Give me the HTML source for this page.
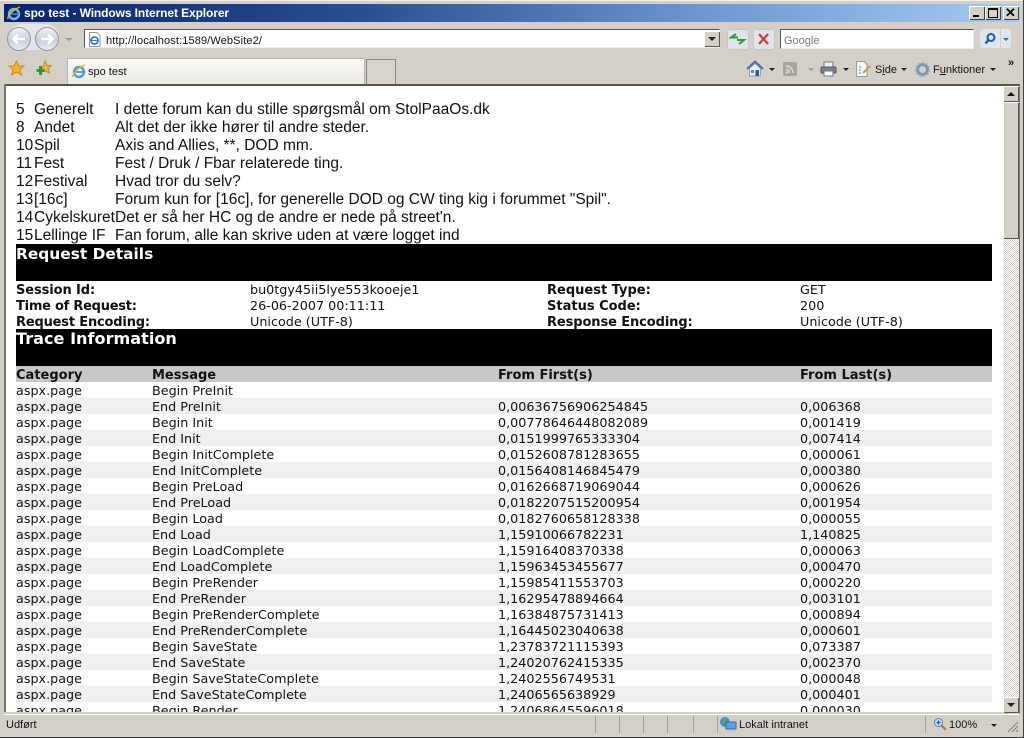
<!DOCTYPE html>
<html><head><meta charset="utf-8"><title>spo test - Windows Internet Explorer</title>
<style>
html,body{margin:0;padding:0;width:1024px;height:738px;overflow:hidden;background:#d4d0c8;}
.a{position:absolute;white-space:nowrap;}
#root{position:absolute;left:0;top:0;width:1024px;height:738px;overflow:hidden;background:#d4d0c8;font-family:"Liberation Sans",sans-serif;}
.ui{font-family:"Liberation Sans",sans-serif;font-size:11px;color:#111;line-height:14px;}
#page{position:absolute;left:6px;top:86px;width:997px;height:626px;background:#fff;overflow:hidden;}
.top{position:absolute;font:15.5px/18px "Liberation Sans",sans-serif;color:#111;white-space:nowrap;}
.v{position:absolute;font:12.75px/16px "DejaVu Sans",sans-serif;color:#111;white-space:nowrap;margin-top:1px;}
.b{font-weight:bold;font-size:13px;}
.bar{position:absolute;left:10px;width:976px;background:#000;}
.h{position:absolute;left:10px;font:bold 16px/18px "DejaVu Sans",sans-serif;color:#fff;white-space:nowrap;}
.row{position:absolute;left:10px;width:976px;height:16px;}
.row span{position:absolute;top:2px;font:12.75px/16px "DejaVu Sans",sans-serif;color:#111;white-space:nowrap;}
.row span:nth-child(1){left:0}.row span:nth-child(2){left:136px}.row span:nth-child(3){left:482px}.row span:nth-child(4){left:784px}
.g{background:#f0f0f0;}
.tb{position:absolute;width:16px;height:14px;background:#d4d0c8;box-shadow:inset 1px 1px 0 #fff,inset -1px -1px 0 #404040;}
.sb{position:absolute;left:1003px;width:16px;}
.arr{position:absolute;width:0;height:0;border-left:4px solid transparent;border-right:4px solid transparent;}
.dn{border-top:3px solid #222;}
</style></head><body>
<div id="root">
<!-- title bar -->
<div class="a" style="left:4px;top:4px;width:1016px;height:18px;background:linear-gradient(90deg,#0a246a 0%,#2a4f90 35%,#6f9ad0 70%,#a6caf0 100%);"></div>
<svg class="a" style="left:6px;top:5px" width="16" height="16" viewBox="0 0 16 16"><circle cx="8" cy="9" r="5" fill="none" stroke="#6fb7ea" stroke-width="2.4"/><path d="M3 9H13" stroke="#3a8fd0" stroke-width="1.6"/><path d="M2 14C1 11 8 4 14 2" fill="none" stroke="#e8b020" stroke-width="1.4"/></svg>
<div class="a" style="left:24px;top:6px;font:bold 12px/14px 'Liberation Sans',sans-serif;color:#fff;letter-spacing:-.1px">spo test - Windows Internet Explorer</div>
<div class="tb" style="left:969px;top:6px"><div class="a" style="left:4px;top:9px;width:6px;height:2px;background:#000"></div></div>
<div class="tb" style="left:985px;top:6px"><div class="a" style="left:3px;top:2px;width:8px;height:7px;border:1px solid #000;border-top-width:2px"></div></div>
<div class="tb" style="left:1003px;top:6px"><div class="a" style="left:2px;top:-1px;font:bold 13px/16px 'Liberation Sans',sans-serif;color:#000">✕</div></div>
<!-- nav -->
<div class="a" style="left:9px;top:24px;width:50px;height:26px;border-radius:13px;background:#e6e6e6"></div>
<svg class="a" style="left:6px;top:25px" width="56" height="27" viewBox="0 0 56 27"><defs><linearGradient id="n" x1="0" y1="0" x2="0" y2="1"><stop offset="0" stop-color="#f2f4f7"/><stop offset=".55" stop-color="#c8d0da"/><stop offset="1" stop-color="#eceff3"/></linearGradient></defs><circle cx="13" cy="14" r="11.5" fill="url(#n)" stroke="#8c96a4"/><circle cx="41" cy="14" r="11.5" fill="url(#n)" stroke="#8c96a4"/><path d="M19 14H8M12 9.500L7.500 14L12 18.500" fill="none" stroke="#fff" stroke-width="2.600"/><path d="M35 14H46M42 9.500L46.500 14L42 18.500" fill="none" stroke="#fff" stroke-width="2.600"/></svg>
<div class="arr" style="left:65px;top:38px;border-top:3px solid #9a9a9a"></div>
<!-- address -->
<div class="a" style="left:84px;top:29px;width:636px;height:19px;background:#fff;border:1px solid #7f9db9;border-color:#555 #eee #eee #555;box-sizing:border-box"></div>
<svg class="a" style="left:87px;top:32px" width="14" height="15" viewBox="0 0 14 15"><path d="M2.500 .500H10L13 3.500V14.500H2.500Z" fill="#fff" stroke="#999"/><circle cx="7.500" cy="8.500" r="3.500" fill="none" stroke="#2b7ec9" stroke-width="1.800"/><path d="M4 8.500H11" stroke="#2b7ec9"/></svg>
<div class="a ui" style="left:106px;top:34px;letter-spacing:.13px">http://localhost:1589/WebSite2/</div>
<div class="a" style="left:704px;top:31px;width:16px;height:16px;background:#d4d0c8;box-shadow:inset 1px 1px 0 #fff,inset -1px -1px 0 #555"><div class="arr dn" style="left:4px;top:6px;border-top-width:4px"></div></div>
<div class="a" style="left:727px;top:29px;width:20px;height:19px;background:#dfe4ea;border:1px solid #c4c8cc;border-radius:3px"></div>
<svg class="a" style="left:729px;top:32px" width="18" height="14" viewBox="0 0 18 14"><path d="M7 2L2 5.500H9" fill="none" stroke="#2f9a34" stroke-width="2"/><path d="M10 12L15 8H8" fill="none" stroke="#2f9a34" stroke-width="2"/></svg>
<div class="a" style="left:753px;top:29px;width:20px;height:19px;background:#dfe4ea;border:1px solid #c4c8cc;border-radius:3px"></div>
<svg class="a" style="left:757px;top:33px" width="13" height="12" viewBox="0 0 13 12"><path d="M2 1L11 11M11 1L2 11" stroke="#c8403c" stroke-width="2.300"/></svg>
<!-- search -->
<div class="a" style="left:780px;top:29px;width:194px;height:20px;background:#fff;border:1px solid;border-color:#555 #eee #eee #555;box-sizing:border-box"></div>
<div class="a ui" style="left:784px;top:34px;color:#7a7a7a">Google</div>
<div class="a" style="left:980px;top:29px;width:20px;height:19px;background:#dfe6f0;border-radius:3px 0 0 3px"></div>
<div class="a" style="left:1001px;top:29px;width:10px;height:19px;background:#dfe6f0;border-radius:0 3px 3px 0"></div>
<svg class="a" style="left:983px;top:32px" width="14" height="14" viewBox="0 0 14 14"><circle cx="8" cy="5.500" r="3.500" fill="none" stroke="#1f54b8" stroke-width="2"/><path d="M5.500 8L2.500 11.500" stroke="#1f54b8" stroke-width="2.400"/></svg>
<div class="arr" style="left:1003px;top:38px;border-left-width:3px;border-right-width:3px;border-top:3px solid #3a6ab0"></div>
<!-- favorites row -->
<svg class="a" style="left:8px;top:60px" width="17" height="17" viewBox="0 0 17 17"><path d="M8.500 1L10.800 6H16L11.800 9.500L13.500 15L8.500 12L3.500 15L5.200 9.500L1 6H6.200Z" fill="#f4b428" stroke="#c88a20"/></svg>
<svg class="a" style="left:35px;top:60px" width="17" height="17" viewBox="0 0 17 17"><path d="M10 1L12 5.500H16L13 8.500L14.500 13L10 11L6 12Z" fill="#e8b840" stroke="#b89030"/><path d="M5.500 6V15M1.500 10.500H9.500" stroke="#2f9a34" stroke-width="3"/></svg>
<div class="a" style="left:67px;top:58px;width:298px;height:26px;background:linear-gradient(#fafafa,#eeeae2);border:1px solid #b8b4ac;border-bottom:0;box-sizing:border-box"></div>
<svg class="a" style="left:71px;top:63px" width="16" height="16" viewBox="0 0 16 16"><circle cx="8" cy="9" r="5" fill="none" stroke="#4aa0de" stroke-width="2.400"/><path d="M3 9H13" stroke="#3a8fd0" stroke-width="1.600"/><path d="M2 14C1 11 8 4 14 2" fill="none" stroke="#e8b020" stroke-width="1.400"/></svg>
<div class="a ui" style="left:88px;top:65px">spo test</div>
<div class="a" style="left:366px;top:59px;width:30px;height:25px;background:#d8d4cc;border:1px solid #8a8880;border-bottom:0;box-sizing:border-box"></div>
<!-- tools -->
<svg class="a" style="left:746px;top:60px" width="18" height="17" viewBox="0 0 18 17"><path d="M1 9L9 1.500L17 9" fill="none" stroke="#46709e" stroke-width="2"/><path d="M3.500 8.500V16H14.500V8.500L9 3.500Z" fill="#e8eef4" stroke="#8aa0b8"/><rect x="9.500" y="10" width="3.500" height="6" fill="#245a96"/><rect x="5" y="10" width="3" height="3" fill="#5a86b4"/></svg>
<div class="arr dn" style="left:769px;top:68px;border-left-width:3px;border-right-width:3px"></div>
<div class="a" style="left:783px;top:62px;width:14px;height:14px;background:#a8a49c;border-radius:2px"></div>
<svg class="a" style="left:783px;top:62px" width="14" height="14" viewBox="0 0 14 14"><path d="M3 4C7 4 10 7 10 11M3 7.500C5 7.500 6.500 9 6.500 11" fill="none" stroke="#e0ddd6" stroke-width="1.500"/><circle cx="3.800" cy="10.500" r="1.200" fill="#e0ddd6"/></svg>
<div class="arr" style="left:808px;top:68px;border-left-width:3px;border-right-width:3px;border-top:3px solid #999"></div>
<svg class="a" style="left:820px;top:61px" width="17" height="16" viewBox="0 0 17 16"><rect x="4" y="1" width="9" height="5" fill="#f0f0f0" stroke="#777"/><rect x="1" y="6" width="15" height="6" rx="1" fill="#7a8288" stroke="#555"/><rect x="4" y="10" width="9" height="5" fill="#fff" stroke="#777"/></svg>
<div class="arr dn" style="left:843px;top:68px;border-left-width:3px;border-right-width:3px"></div>
<svg class="a" style="left:855px;top:60px" width="18" height="18" viewBox="0 0 18 18"><path d="M1.500 1.500H9L12 4.500V16.500H1.500Z" fill="#f6f6f2" stroke="#9a9a94"/><path d="M4 7H6M4 10H6M4 13H6" stroke="#5a8ab8"/><path d="M8 13L15 6" stroke="#c89a50" stroke-width="2"/></svg>
<div class="a ui" style="left:875px;top:63px">S<u>i</u>de</div>
<div class="arr dn" style="left:901px;top:68px;border-left-width:3px;border-right-width:3px"></div>
<svg class="a" style="left:914px;top:61px" width="17" height="17" viewBox="0 0 17 17"><circle cx="8.500" cy="8.500" r="5" fill="none" stroke="#7f97ae" stroke-width="3"/><circle cx="8.500" cy="8.500" r="7" fill="none" stroke="#a4b6c8" stroke-width="1.800" stroke-dasharray="2 2"/></svg>
<div class="a ui" style="left:933px;top:63px">F<u>u</u>nktioner</div>
<div class="arr dn" style="left:990px;top:68px;border-left-width:3px;border-right-width:3px"></div>
<div class="a ui" style="left:1008px;top:56px;font-weight:bold;font-size:11px">»</div>
<!-- content frame -->
<div class="a" style="left:4px;top:84px;width:1016px;height:2px;background:#55534e"></div>
<div class="a" style="left:4px;top:84px;width:2px;height:630px;background:#77756f"></div>
<div class="a" style="left:1019px;top:84px;width:1px;height:630px;background:#77756f"></div>
<div class="a" style="left:4px;top:712px;width:1000px;height:2px;background:#d4d0c8"></div>
<div id="page">
<div class="top" style="left:10px;top:15px">5</div><div class="top" style="left:28px;top:15px">Generelt</div><div class="top" style="left:109px;top:15px">I dette forum kan du stille spørgsmål om StolPaaOs.dk</div>
<div class="top" style="left:10px;top:33px">8</div><div class="top" style="left:28px;top:33px">Andet</div><div class="top" style="left:109px;top:33px">Alt det der ikke hører til andre steder.</div>
<div class="top" style="left:10px;top:51px">10</div><div class="top" style="left:28px;top:51px">Spil</div><div class="top" style="left:109px;top:51px">Axis and Allies, **, DOD mm.</div>
<div class="top" style="left:10px;top:69px">11</div><div class="top" style="left:28px;top:69px">Fest</div><div class="top" style="left:109px;top:69px">Fest / Druk / Fbar relaterede ting.</div>
<div class="top" style="left:10px;top:87px">12</div><div class="top" style="left:28px;top:87px">Festival</div><div class="top" style="left:109px;top:87px">Hvad tror du selv?</div>
<div class="top" style="left:10px;top:105px">13</div><div class="top" style="left:28px;top:105px">[16c]</div><div class="top" style="left:109px;top:105px">Forum kun for [16c], for generelle DOD og CW ting kig i forummet "Spil".</div>
<div class="top" style="left:10px;top:123px">14</div><div class="top" style="left:28px;top:123px">Cykelskuret</div><div class="top" style="left:109px;top:123px">Det er så her HC og de andre er nede på street'n.</div>
<div class="top" style="left:10px;top:141px">15</div><div class="top" style="left:28px;top:141px">Lellinge IF</div><div class="top" style="left:109px;top:141px">Fan forum, alle kan skrive uden at være logget ind</div>

<div class="bar" style="top:158px;height:37px"></div>
<div class="h" style="top:159px;font-size:15.4px">Request Details</div>
<div class="v b" style="left:10px;top:196px;letter-spacing:-.1px">Session Id:</div><div class="v" style="left:244px;top:196px">bu0tgy45ii5lye553kooeje1</div><div class="v b" style="left:541px;top:196px">Request Type:</div><div class="v" style="left:794px;top:196px">GET</div>
<div class="v b" style="left:10px;top:212px;letter-spacing:-.25px">Time of Request:</div><div class="v" style="left:244px;top:212px">26-06-2007 00:11:11</div><div class="v b" style="left:541px;top:212px">Status Code:</div><div class="v" style="left:794px;top:212px">200</div>
<div class="v b" style="left:10px;top:228px;letter-spacing:-.18px">Request Encoding:</div><div class="v" style="left:244px;top:228px">Unicode (UTF-8)</div><div class="v b" style="left:541px;top:228px;letter-spacing:-.1px">Response Encoding:</div><div class="v" style="left:794px;top:228px">Unicode (UTF-8)</div>
<div class="bar" style="top:243px;height:37px"></div>
<div class="h" style="top:244px;font-size:16.1px">Trace Information</div>
<div class="bar" style="top:280px;height:16px;background:#c8c8c8"></div>
<div class="v b" style="left:10px;top:281px">Category</div><div class="v b" style="left:146px;top:281px">Message</div><div class="v b" style="left:492px;top:281px">From First(s)</div><div class="v b" style="left:794px;top:281px">From Last(s)</div>

<div class="row" style="top:296px"><span>aspx.page</span><span>Begin PreInit</span><span></span><span></span></div>
<div class="row g" style="top:312px"><span>aspx.page</span><span>End PreInit</span><span>0,00636756906254845</span><span>0,006368</span></div>
<div class="row" style="top:328px"><span>aspx.page</span><span>Begin Init</span><span>0,00778646448082089</span><span>0,001419</span></div>
<div class="row g" style="top:344px"><span>aspx.page</span><span>End Init</span><span>0,0151999765333304</span><span>0,007414</span></div>
<div class="row" style="top:360px"><span>aspx.page</span><span>Begin InitComplete</span><span>0,0152608781283655</span><span>0,000061</span></div>
<div class="row g" style="top:376px"><span>aspx.page</span><span>End InitComplete</span><span>0,0156408146845479</span><span>0,000380</span></div>
<div class="row" style="top:392px"><span>aspx.page</span><span>Begin PreLoad</span><span>0,0162668719069044</span><span>0,000626</span></div>
<div class="row g" style="top:408px"><span>aspx.page</span><span>End PreLoad</span><span>0,0182207515200954</span><span>0,001954</span></div>
<div class="row" style="top:424px"><span>aspx.page</span><span>Begin Load</span><span>0,0182760658128338</span><span>0,000055</span></div>
<div class="row g" style="top:440px"><span>aspx.page</span><span>End Load</span><span>1,15910066782231</span><span>1,140825</span></div>
<div class="row" style="top:456px"><span>aspx.page</span><span>Begin LoadComplete</span><span>1,15916408370338</span><span>0,000063</span></div>
<div class="row g" style="top:472px"><span>aspx.page</span><span>End LoadComplete</span><span>1,15963453455677</span><span>0,000470</span></div>
<div class="row" style="top:488px"><span>aspx.page</span><span>Begin PreRender</span><span>1,15985411553703</span><span>0,000220</span></div>
<div class="row g" style="top:504px"><span>aspx.page</span><span>End PreRender</span><span>1,16295478894664</span><span>0,003101</span></div>
<div class="row" style="top:520px"><span>aspx.page</span><span>Begin PreRenderComplete</span><span>1,16384875731413</span><span>0,000894</span></div>
<div class="row g" style="top:536px"><span>aspx.page</span><span>End PreRenderComplete</span><span>1,16445023040638</span><span>0,000601</span></div>
<div class="row" style="top:552px"><span>aspx.page</span><span>Begin SaveState</span><span>1,23783721115393</span><span>0,073387</span></div>
<div class="row g" style="top:568px"><span>aspx.page</span><span>End SaveState</span><span>1,24020762415335</span><span>0,002370</span></div>
<div class="row" style="top:584px"><span>aspx.page</span><span>Begin SaveStateComplete</span><span>1,2402556749531</span><span>0,000048</span></div>
<div class="row g" style="top:600px"><span>aspx.page</span><span>End SaveStateComplete</span><span>1,2406565638929</span><span>0,000401</span></div>
<div class="row" style="top:616px"><span>aspx.page</span><span>Begin Render</span><span>1,24068645596018</span><span>0,000030</span></div>
</div>
<!-- scrollbar -->
<div class="sb" style="top:86px;height:627px;background:repeating-conic-gradient(#d4d0c8 0 25%,#fff 0 50%) 0 0/2px 2px"></div>
<div class="sb" style="top:86px;height:16px;background:#d4d0c8;box-shadow:inset 1px 1px 0 #fff,inset -1px -1px 0 #555"><div class="arr" style="left:4px;top:6px;border-bottom:4px solid #111"></div></div>
<div class="sb" style="top:102px;height:137px;background:#d4d0c8;box-shadow:inset 1px 1px 0 #fff,inset -1px -1px 0 #555"></div>
<div class="sb" style="top:697px;height:16px;background:#d4d0c8;box-shadow:inset 1px 1px 0 #fff,inset -1px -1px 0 #555"><div class="arr dn" style="left:4px;top:6px;border-top-width:4px"></div></div>
<!-- status -->
<div class="a" style="left:4px;top:714px;width:1016px;height:1px;background:#fff"></div>
<div class="a ui" style="left:6px;top:718px">Udført</div>
<div class="a" style="left:595px;top:716px;width:1px;height:17px;background:#a4a098"></div>
<div class="a" style="left:619px;top:716px;width:1px;height:17px;background:#a4a098"></div>
<div class="a" style="left:643px;top:716px;width:1px;height:17px;background:#a4a098"></div>
<div class="a" style="left:667px;top:716px;width:1px;height:17px;background:#a4a098"></div>
<div class="a" style="left:693px;top:716px;width:1px;height:17px;background:#a4a098"></div>
<div class="a" style="left:717px;top:716px;width:1px;height:17px;background:#a4a098"></div>
<div class="a" style="left:925px;top:716px;width:1px;height:17px;background:#a4a098"></div>
<svg class="a" style="left:719px;top:716px" width="18" height="18" viewBox="0 0 18 18"><circle cx="6" cy="6" r="5" fill="#3f8fd8"/><path d="M3 4L7 3L8 6L4 8Z" fill="#58b050"/><rect x="7" y="6" width="10" height="7" fill="#5aa0e0" stroke="#3a6aa0"/><rect x="8" y="14" width="9" height="3" fill="#c0c8d4"/></svg>
<div class="a ui" style="left:739px;top:718px">Lokalt intranet</div>
<svg class="a" style="left:933px;top:717px" width="14" height="14" viewBox="0 0 14 14"><circle cx="5.500" cy="5.500" r="4" fill="#cfe0f4" stroke="#5a82b4"/><path d="M3.500 5.500H7.500M5.500 3.500V7.500" stroke="#1f54b8" stroke-width="1.300"/><path d="M8.500 8.500L13 13" stroke="#a87848" stroke-width="2"/></svg>
<div class="a ui" style="left:949px;top:718px">100%</div>
<div class="arr dn" style="left:991px;top:724px;border-left-width:3px;border-right-width:3px"></div>
<svg class="a" style="left:1006px;top:720px" width="13" height="13" viewBox="0 0 13 13"><path d="M12 2L2 12M12 6L6 12M12 10L10 12" stroke="#8a8880" stroke-width="1.200"/></svg>
<div class="a" style="left:0;top:734px;width:1024px;height:4px;background:#d4d0c8;border-bottom:1px solid #404040;box-sizing:border-box"></div>
<div class="a" style="left:0;top:0;width:1024px;height:1px;background:#f2f0ea"></div>
<div class="a" style="left:1023px;top:0;width:1px;height:738px;background:#404040"></div>
</div>
</body></html>
